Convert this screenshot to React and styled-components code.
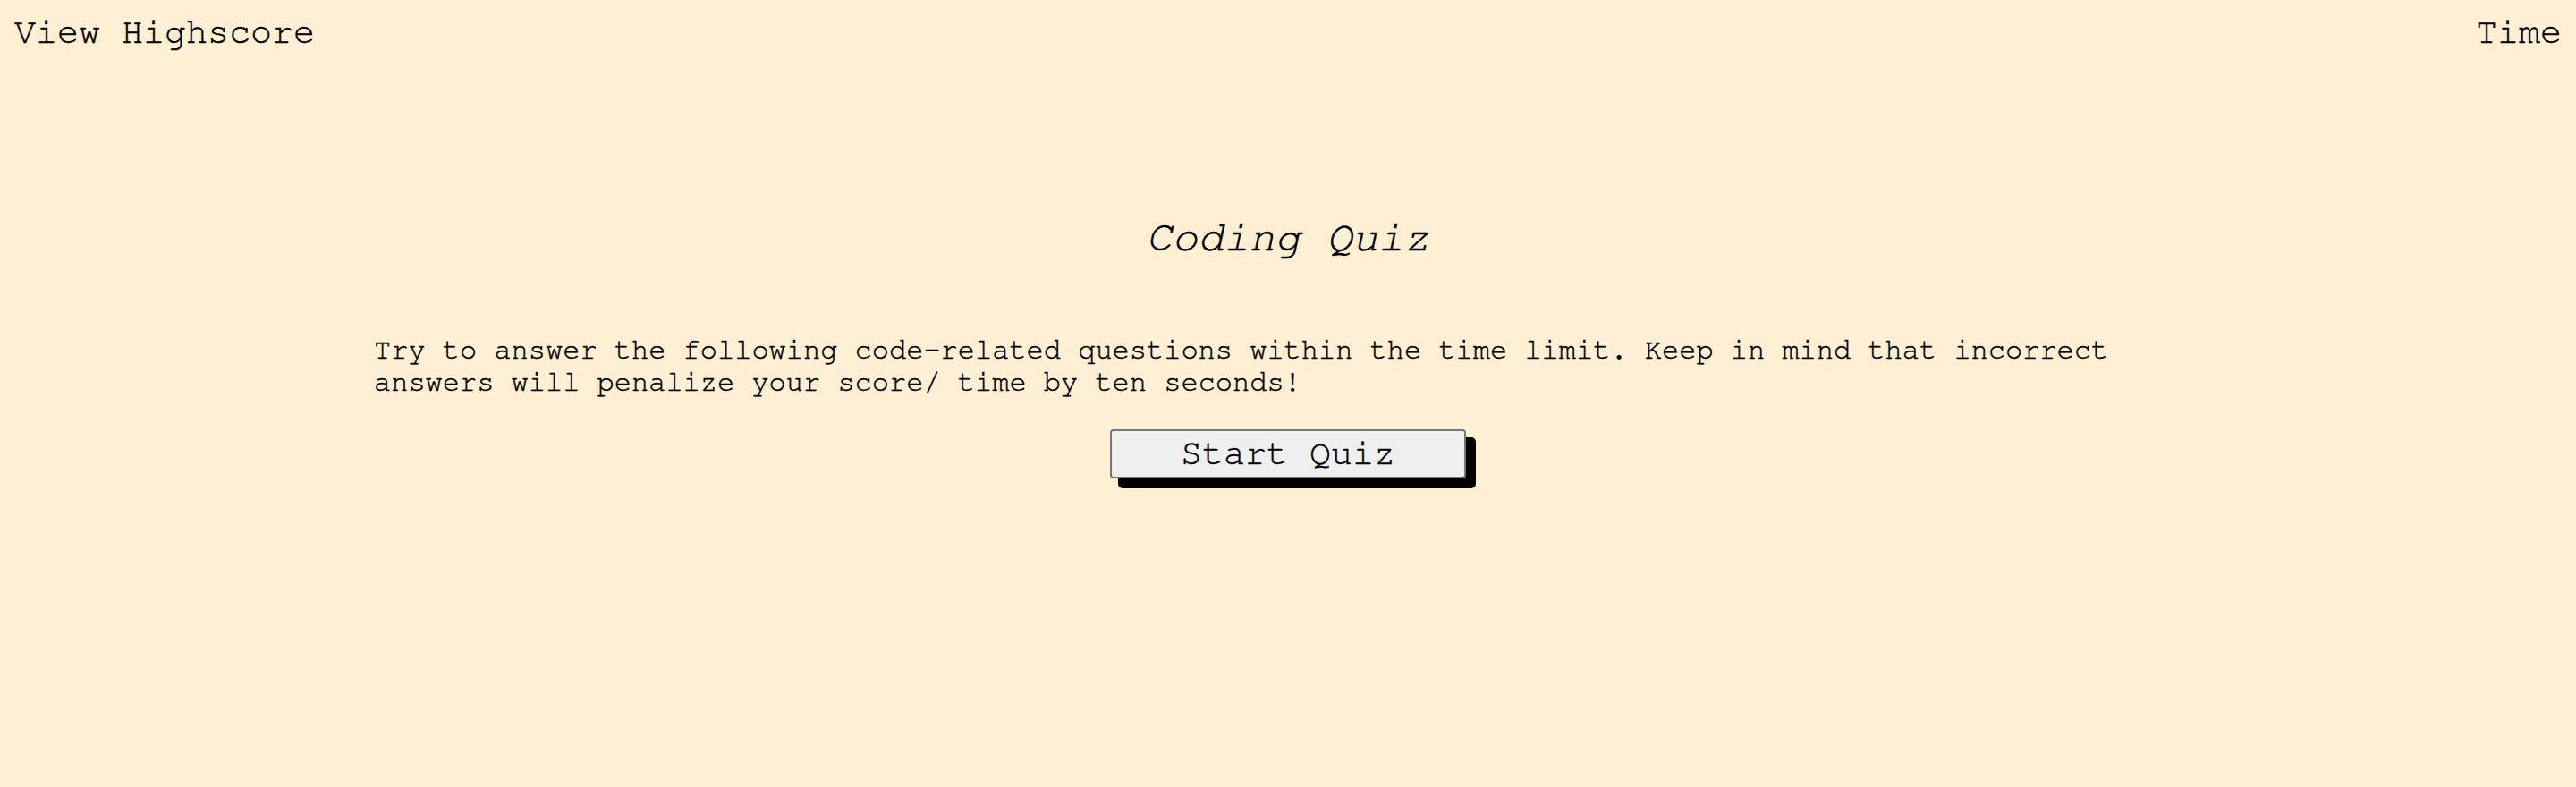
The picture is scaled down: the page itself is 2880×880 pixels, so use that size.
import React from "react";
import styled, { createGlobalStyle } from "styled-components";

const mono = `"Nimbus Mono PS", "Nimbus Mono L", "FreeMono", "Courier New", "Liberation Mono", monospace`;

const GlobalStyle = createGlobalStyle`
  html, body {
    margin: 0;
    padding: 0;
    background: #ffefd5;
  }
  body {
    margin: 8px;
    font-family: ${mono};
    color: #000;
    -webkit-text-stroke: 0.4px #000;
  }
`;

const Page = styled.div`
  min-height: 864px;
  display: flex;
  flex-direction: column;
`;

const Header = styled.header`
  display: flex;
  justify-content: space-between;
  align-items: center;
  padding: 6px 8px 10px;
  font-size: 40px;
  line-height: 45px;
`;

const HeaderItem = styled.span`
  white-space: nowrap;
`;

const Main = styled.main`
  display: flex;
  flex-direction: column;
  align-items: center;
  padding-bottom: 40px;
`;

const Title = styled.h1`
  margin: 170px 0 0;
  font-size: 48px;
  font-style: italic;
  font-weight: normal;
  line-height: 54px;
  text-align: center;
`;

const Intro = styled.p`
  width: 2044px;
  margin: 80px 0 0;
  font-size: 32px;
  line-height: 36px;
  text-align: left;
`;

const StartButton = styled.button`
  margin-top: 35px;
  width: 398px;
  padding: 3px 0;
  font-family: ${mono};
  font-size: 40px;
  line-height: 45px;
  color: #000;
  -webkit-text-stroke: 0.4px #000;
  background: #efefef;
  border: 2px solid #767676;
  border-radius: 4px;
  box-shadow: 10px 10px 0 1px #000;
  cursor: pointer;
`;

export default function App() {
  return (
    <Page>
      <GlobalStyle />
      <Header>
        <HeaderItem>View Highscore</HeaderItem>
        <HeaderItem>Time</HeaderItem>
      </Header>
      <Main>
        <Title>Coding Quiz</Title>
        <Intro>
          Try to answer the following code-related questions within the time
          limit. Keep in mind that incorrect answers will penalize your score/
          time by ten seconds!
        </Intro>
        <StartButton>Start Quiz</StartButton>
      </Main>
    </Page>
  );
}
